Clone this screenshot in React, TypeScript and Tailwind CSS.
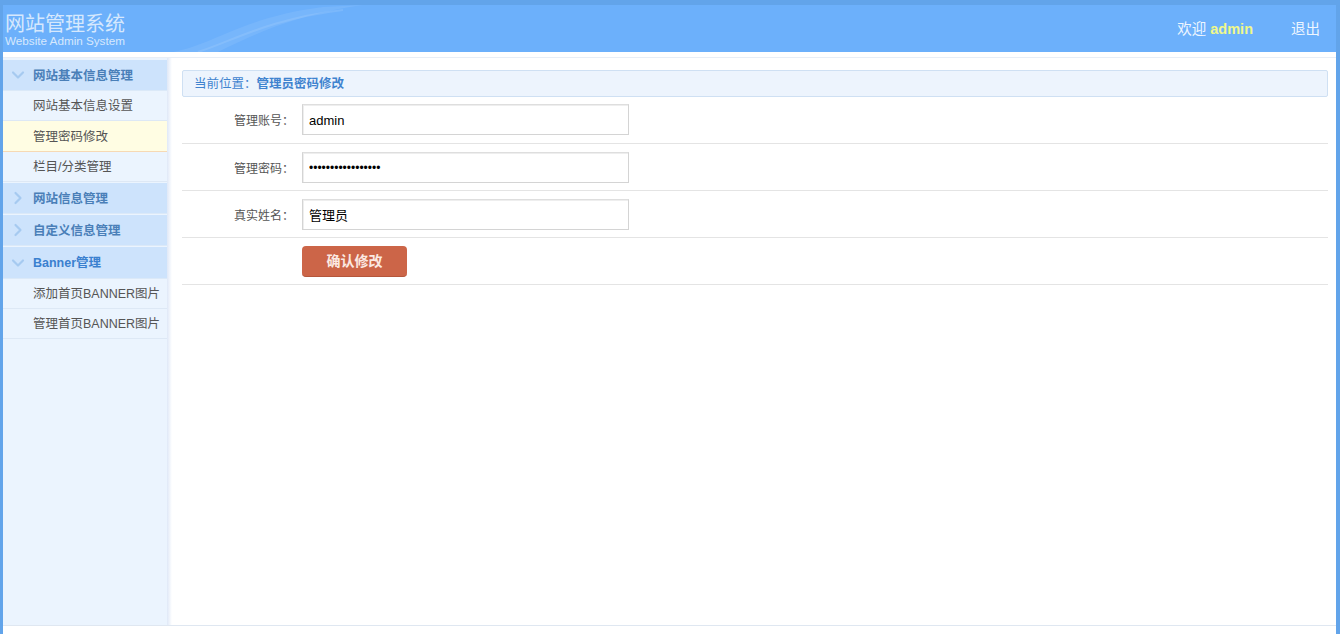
import { ChevronDown, ChevronRight } from "lucide-react";

const font = "font-['Liberation_Sans','Noto_Sans_CJK_SC',sans-serif]";
const inputCls = "block h-[31px] w-[327px] border border-[#d4d4d4] border-t-[#dedede] px-[6px] text-[13px] text-black outline-none shadow-[inset_1px_1px_0_#eeeeee]";

function MenuHead({ label, open, active, gap = true, tall }: { label: string; open?: boolean; active?: boolean; gap?: boolean; tall?: boolean }) {
  return (
    <div className={`flex items-center border-b border-[#dbe9f8] bg-[#cde3fc] ${tall ? "h-[32px]" : "h-[31px]"} ${gap ? "mb-px" : ""}`}>
      <div className="flex w-[30px] shrink-0 justify-center">
        {open ? (
          <ChevronDown size={20} strokeWidth={2.6} className="text-[#a6caf0]" />
        ) : (
          <ChevronRight size={20} strokeWidth={2.6} className="text-[#a6caf0]" />
        )}
      </div>
      <span className={`pt-[2px] text-[12.5px] font-bold ${active ? "text-[#3a80cf]" : "text-[#4a7fb8]"}`}>{label}</span>
    </div>
  );
}

function MenuItem({ label, selected }: { label: string; selected?: boolean }) {
  return (
    <div
      className={`flex items-center pl-[30px] text-[12.5px] text-[#555] border-b ${
        selected ? "h-[31px] pt-[2px] bg-[#fffde3] border-[#f6d9b4]" : "h-[30px] pt-px border-[#dde8f5]"
      }`}
    >
      {label}
    </div>
  );
}

function FormRow({ label, first, children }: { label?: string; first?: boolean; children: React.ReactNode }) {
  return (
    <div className={`flex h-[47px] items-start border-b border-[#e4e4e4] ${first ? "pt-[7px]" : "pt-[8px]"}`}>
      <div className="flex h-[31px] w-[112px] items-center justify-end pt-[2px] text-[12px] text-[#555]">{label}</div>
      <div className="ml-[8px]">{children}</div>
    </div>
  );
}

export default function App() {
  return (
    <div className={`${font} relative flex h-[634px] w-[1340px] flex-col overflow-hidden border-t-[5px] border-l-[3px] border-r-[4px] border-[#62a4ea] bg-white`}>
      {/* Top notch */}
      <svg className="absolute left-[661px] top-[-5px] h-[4px] w-[8px]" viewBox="0 0 8 4">
        <path d="M1 0 L7 0 L4 4 Z" fill="#cfe3f8" />
      </svg>

      {/* Header */}
      <div className="relative flex h-[47px] shrink-0 items-center justify-between bg-[#6cb0fb] pl-[2px] pr-[16px]">
        <svg className="absolute left-[170px] top-0 h-[47px] w-[190px]" viewBox="0 0 190 47" fill="none">
          <path d="M0 47 C40 40 70 12 150 2 L190 0 C120 10 80 30 45 47 Z" fill="#ffffff" fillOpacity="0.08" />
          <path d="M25 47 C60 36 95 14 170 5" stroke="#ffffff" strokeOpacity="0.1" strokeWidth="2" />
        </svg>
        <div className="relative flex flex-col pt-[1px] text-[#d6e8fd]">
          <span className="text-[20px] leading-[24px]">网站管理系统</span>
          <span className="text-[11.7px] leading-[10px]">Website Admin System</span>
        </div>
        <div className="relative flex items-center pt-[2px] text-[14.5px] text-[#eef6ff]">
          <span>欢迎</span>
          <span className="ml-[4px] font-bold text-[#f0f88a]">admin</span>
          <span className="ml-[38px]">退出</span>
        </div>
      </div>

      {/* Body */}
      <div className="flex min-h-0 flex-1 border-b border-[#dfe7f1] mt-[5px] border-t border-t-[#e8eef6] mb-[8px]">
        <aside className="w-[164px] shrink-0 bg-[#ebf4fe] pt-[2px]">
          <MenuHead label="网站基本信息管理" open gap={false} />
          <MenuItem label="网站基本信息设置" />
          <MenuItem label="管理密码修改" selected />
          <MenuItem label="栏目/分类管理" />
          <div className="h-px" />
          <MenuHead label="网站信息管理" />
          <MenuHead label="自定义信息管理" />
          <MenuHead label="Banner管理" open active gap={false} tall />
          <MenuItem label="添加首页BANNER图片" />
          <MenuItem label="管理首页BANNER图片" />
        </aside>
        <div className="w-[5px] shrink-0 bg-gradient-to-r from-[#dfe8f7] to-white" />

        {/* Content */}
        <main className="ml-[10px] mr-[8px] flex-1 pt-[12px]">
          <div className="flex h-[27px] items-center rounded-[2px] border border-[#cfe0f3] bg-[#edf4fd] pl-[11px] pt-px text-[12.5px] font-bold text-[#3f83cf]">
            <span className="font-normal">当前位置：</span>
            <span>管理员密码修改</span>
          </div>
          <FormRow first label="管理账号：">
            <input readOnly value="admin" className={`${inputCls} pt-px`} />
          </FormRow>
          <FormRow label="管理密码：">
            <input readOnly type="password" value="1234567890abcdefg" className={`${inputCls} !text-[12px]`} />
          </FormRow>
          <FormRow label="真实姓名：">
            <input readOnly value="管理员" className={inputCls} />
          </FormRow>
          <FormRow>
            <button className="block h-[31px] w-[105px] rounded-[4px] border-b border-[#b5563b] bg-[#cc6548] text-[14px] font-bold text-[#fbe9e2]">
              确认修改
            </button>
          </FormRow>
        </main>
      </div>
    </div>
  );
}
